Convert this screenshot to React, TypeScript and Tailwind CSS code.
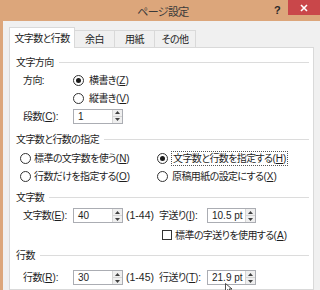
import React from 'react';

const font = "font-['Liberation_Sans','Noto_Sans_CJK_JP',sans-serif] [font-feature-settings:'palt']";

function U({ k }: { k: string }) {
  return (
    <span className="tracking-normal">
      (<span className="underline underline-offset-1">{k}</span>)
    </span>
  );
}

function SectionLabel({ text }: { text: string }) {
  return (
    <div className="flex h-[16px] items-center pl-[6px] pr-[4px]">
      <span>{text}</span>
      <div className="ml-[5px] h-px flex-1 bg-[#dcdcdc]" />
    </div>
  );
}

function Radio({ checked }: { checked?: boolean }) {
  return (
    <span className="flex h-[11px] w-[11px] shrink-0 items-center justify-center rounded-full border border-[#333] bg-white">
      {checked && <span className="h-[5px] w-[5px] rounded-full bg-[#1a1a1a]" />}
    </span>
  );
}

function Spin({ value, w }: { value: string; w: string }) {
  return (
    <div className={`flex h-[15px] border border-[#abadb3] bg-white tracking-normal ${w}`}>
      <div className="flex-1 pl-[4px] leading-[13px]">{value}</div>
      <div className="flex w-[10px] flex-col border-l border-[#d5d5d5]">
        <div className="flex flex-1 items-center justify-center border-b border-[#d5d5d5] bg-[#efefef]">
          <svg width="5" height="3" viewBox="0 0 5 3">
            <path d="M0 3L2.5 0L5 3Z" fill="#404040" />
          </svg>
        </div>
        <div className="flex flex-1 items-center justify-center bg-[#efefef]">
          <svg width="5" height="3" viewBox="0 0 5 3">
            <path d="M0 0L2.5 3L5 0Z" fill="#404040" />
          </svg>
        </div>
      </div>
    </div>
  );
}

export default function App() {
  return (
    <div className={`relative flex h-[290px] w-[320px] flex-col overflow-hidden bg-[#dca67b] text-[10px] tracking-[-0.6px] text-[#1e1e1e] ${font}`}>
      {/* title bar */}
      <div className="relative flex h-[21px] shrink-0 items-center justify-center">
        <span className="mt-[3px] pl-[6px] text-[11px] text-[#3a3a3a]">ページ設定</span>
        <span className="absolute left-[274px] top-[2px] text-[11px] font-bold text-[#2a2a2a]">?</span>
        <div className="absolute right-0 top-0 flex h-[15px] w-[32px] items-center justify-center bg-[#c9474a]">
          <svg width="8" height="8" viewBox="0 0 8 8">
            <path d="M1 1L7 7M7 1L1 7" stroke="white" strokeWidth="1.6" />
          </svg>
        </div>
      </div>

      {/* dialog body */}
      <div className="ml-[3px] flex flex-1 flex-col bg-[#f0f0f0] pl-[6px] pr-[6px] pt-[6px]">
        {/* tabs */}
        <div className="relative z-10 flex h-[20px] items-end">
          <div className="-mb-px flex h-[21px] w-[66px] items-center justify-center border border-b-0 border-[#d9d9d9] bg-white">
            文字数と行数
          </div>
          <div className="flex h-[17px] w-[40px] items-center justify-center border border-l-0 border-b-0 border-[#d9d9d9] bg-[#f0f0f0]">
            余白
          </div>
          <div className="flex h-[17px] w-[40px] items-center justify-center border border-l-0 border-b-0 border-[#d9d9d9] bg-[#f0f0f0]">
            用紙
          </div>
          <div className="flex h-[17px] w-[41px] items-center justify-center border border-l-0 border-b-0 border-[#d9d9d9] bg-[#f0f0f0]">
            その他
          </div>
        </div>

        {/* panel */}
        <div className="flex flex-1 flex-col border border-[#d9d9d9] bg-white pt-[6px]">
          <SectionLabel text="文字方向" />
          <div className="mt-[2px] flex h-[16px] items-center pl-[13px]">
            <span className="w-[50px]">方向:</span>
            <Radio checked />
            <span className="ml-[5px]">
              横書き<U k="Z" />
            </span>
          </div>
          <div className="mt-[2px] flex h-[16px] items-center pl-[63px]">
            <Radio />
            <span className="ml-[5px]">
              縦書き<U k="V" />
            </span>
          </div>
          <div className="mt-[2px] flex h-[16px] items-center pl-[13px]">
            <span className="w-[50px]">
              段数<U k="C" />:
            </span>
            <Spin value="1" w="w-[50px]" />
          </div>

          <div className="mt-[7px]">
            <SectionLabel text="文字数と行数の指定" />
          </div>
          <div className="mt-[3px] flex h-[16px] items-center">
            <div className="flex w-[147px] items-center pl-[10px]">
              <Radio />
              <span className="ml-[3px]">
                標準の文字数を使う<U k="N" />
              </span>
            </div>
            <Radio checked />
            <span className="ml-[3px] border border-dotted border-[#555] px-px leading-[13px]">
              文字数と行数を指定する<U k="H" />
            </span>
          </div>
          <div className="mt-[2px] flex h-[16px] items-center">
            <div className="flex w-[147px] items-center pl-[10px]">
              <Radio />
              <span className="ml-[3px]">
                行数だけを指定する<U k="O" />
              </span>
            </div>
            <Radio />
            <span className="ml-[4px]">
              原稿用紙の設定にする<U k="X" />
            </span>
          </div>

          <div className="mt-[5px]">
            <SectionLabel text="文字数" />
          </div>
          <div className="mt-[2px] flex h-[17px] items-center">
            <div className="flex w-[149px] items-center pl-[13px]">
              <span className="w-[50px]">
                文字数<U k="E" />:
              </span>
              <Spin value="40" w="w-[50px]" />
              <span className="ml-[3px] text-[10.5px] tracking-normal">(1-44)</span>
            </div>
            <span className="w-[48px]">
              字送り<U k="I" />:
            </span>
            <Spin value="10.5 pt" w="w-[49px]" />
          </div>
          <div className="mt-[3px] flex h-[16px] items-center pl-[152px]">
            <span className="h-[10px] w-[10px] border border-[#333] bg-white" />
            <span className="ml-[3px]">
              標準の字送りを使用する<U k="A" />
            </span>
          </div>

          <div className="mt-[4px]">
            <SectionLabel text="行数" />
          </div>
          <div className="mt-[6px] flex h-[17px] items-center">
            <div className="flex w-[149px] items-center pl-[13px]">
              <span className="w-[50px]">
                行数<U k="R" />:
              </span>
              <Spin value="30" w="w-[50px]" />
              <span className="ml-[3px] text-[10.5px] tracking-normal">(1-45)</span>
            </div>
            <span className="w-[48px]">
              行送り<U k="T" />:
            </span>
            <Spin value="21.9 pt" w="w-[49px]" />
          </div>
        </div>
      </div>

      {/* mouse pointer */}
      <svg className="absolute left-[225px] top-[283px]" width="8" height="10" viewBox="0 0 8 10">
        <path d="M0.5 0.5L0.5 8.5L2.5 6.5L4 9.5L5.5 8.8L4 6L7 6Z" fill="white" stroke="#222" strokeWidth="0.8" />
      </svg>
    </div>
  );
}
